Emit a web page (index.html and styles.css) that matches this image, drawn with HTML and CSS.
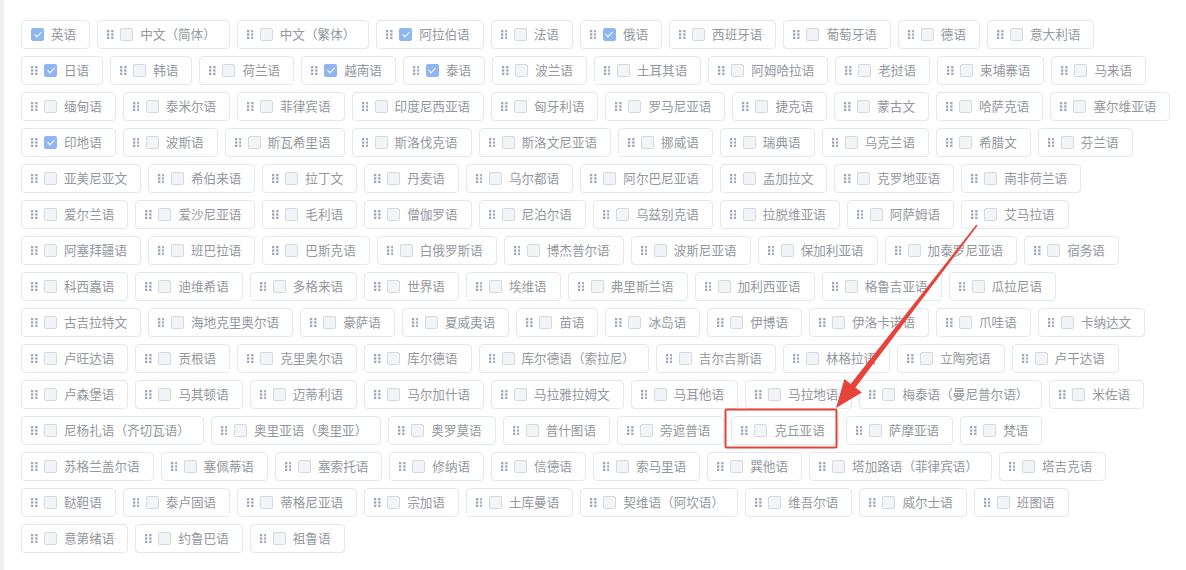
FILE: index.html
```html
<!DOCTYPE html>
<html lang="zh-CN">
<head>
<meta charset="utf-8">
<title>语言设置</title>
<link rel="stylesheet" href="styles.css">
</head>
<body>
<main class="panel">
  <ul class="lang-list" id="langList"></ul>
</main>

<svg class="mark-layer" width="1186" height="570" viewBox="0 0 1186 570" aria-hidden="true">
  <rect class="mark-box" x="725.5" y="409.5" width="111" height="38" rx="1"></rect>
  <polygon class="mark-arrow" points="976.4,224.5 850.7,384.0 844.4,379.1 836,408 861.8,392.5 855.5,387.6 977.6,225.5"></polygon>
</svg>

<script src="app.js"></script>
</body>
</html>
```

FILE: styles.css
```css
* {
  box-sizing: border-box;
}

html,
body {
  margin: 0;
  height: 100%;
  overflow: hidden;
}

body {
  background: #eef0f4;
  font-family: "Noto Sans CJK SC", "Microsoft YaHei", sans-serif;
  position: relative;
}

.panel {
  margin-left: 4px;
  height: 100%;
  background: #ffffff;
  padding: 20px 10px 0 17px;
}

.lang-list {
  list-style: none;
  margin: 0;
  padding: 0;
  display: flex;
  flex-wrap: wrap;
  gap: 7px 7px;
}

.lang-item {
  display: flex;
  align-items: center;
  height: 29px;
  padding: 0 13px 0 9px;
  border: 1px solid #e4e7ed;
  border-radius: 4px;
  background: #fff;
}

.drag-handle {
  display: block;
  width: 6.5px;
  height: 9px;
  margin-right: 6.5px;
  flex: none;
}

.drag-handle rect {
  fill: #9ca5b9;
}

.check {
  position: relative;
  width: 13px;
  height: 13px;
  flex: none;
  border: 1px solid #d5d8df;
  border-radius: 2px;
  background: #f2f4f7;
  margin-right: 7px;
}

.check.is-checked {
  background: #8fb6f3;
  border-color: #8fb6f3;
}

.check.is-checked::after {
  content: "";
  position: absolute;
  left: 3.5px;
  top: 1px;
  width: 3px;
  height: 6px;
  border: solid #ffffff;
  border-width: 0 1.3px 1.3px 0;
  transform: rotate(45deg);
}

.label {
  font-size: 12.6px;
  line-height: 1;
  color: #93979e;
  white-space: nowrap;
}

.mark-layer {
  position: absolute;
  left: 0;
  top: 0;
  pointer-events: none;
}

.mark-box {
  fill: none;
  stroke: #e8433a;
  stroke-width: 2;
}

.mark-arrow {
  fill: #e8433a;
}
```

FILE: app.js
```js
// Translation target languages; `on` marks enabled ones, `fixed` the pinned source language.
const languages = [
  ["英语", 1, 1], ["中文（简体）"], ["中文（繁体）"], ["阿拉伯语", 1], ["法语"], ["俄语", 1],
  ["西班牙语"], ["葡萄牙语"], ["德语"], ["意大利语"],
  ["日语", 1], ["韩语"], ["荷兰语"], ["越南语", 1], ["泰语", 1], ["波兰语"], ["土耳其语"],
  ["阿姆哈拉语"], ["老挝语"], ["柬埔寨语"], ["马来语"],
  ["缅甸语"], ["泰米尔语"], ["菲律宾语"], ["印度尼西亚语"], ["匈牙利语"], ["罗马尼亚语"],
  ["捷克语"], ["蒙古文"], ["哈萨克语"], ["塞尔维亚语"],
  ["印地语", 1], ["波斯语"], ["斯瓦希里语"], ["斯洛伐克语"], ["斯洛文尼亚语"], ["挪威语"],
  ["瑞典语"], ["乌克兰语"], ["希腊文"], ["芬兰语"],
  ["亚美尼亚文"], ["希伯来语"], ["拉丁文"], ["丹麦语"], ["乌尔都语"], ["阿尔巴尼亚语"],
  ["孟加拉文"], ["克罗地亚语"], ["南非荷兰语"],
  ["爱尔兰语"], ["爱沙尼亚语"], ["毛利语"], ["僧伽罗语"], ["尼泊尔语"], ["乌兹别克语"],
  ["拉脱维亚语"], ["阿萨姆语"], ["艾马拉语"],
  ["阿塞拜疆语"], ["班巴拉语"], ["巴斯克语"], ["白俄罗斯语"], ["博杰普尔语"], ["波斯尼亚语"],
  ["保加利亚语"], ["加泰罗尼亚语"], ["宿务语"],
  ["科西嘉语"], ["迪维希语"], ["多格来语"], ["世界语"], ["埃维语"], ["弗里斯兰语"],
  ["加利西亚语"], ["格鲁吉亚语"], ["瓜拉尼语"],
  ["古吉拉特文"], ["海地克里奥尔语"], ["豪萨语"], ["夏威夷语"], ["苗语"], ["冰岛语"],
  ["伊博语"], ["伊洛卡诺语"], ["爪哇语"], ["卡纳达文"],
  ["卢旺达语"], ["贡根语"], ["克里奥尔语"], ["库尔德语"], ["库尔德语（索拉尼）"], ["吉尔吉斯语"],
  ["林格拉语"], ["立陶宛语"], ["卢干达语"],
  ["卢森堡语"], ["马其顿语"], ["迈蒂利语"], ["马尔加什语"], ["马拉雅拉姆文"], ["马耳他语"],
  ["马拉地语"], ["梅泰语（曼尼普尔语）"], ["米佐语"],
  ["尼杨扎语（齐切瓦语）"], ["奥里亚语（奥里亚）"], ["奥罗莫语"], ["普什图语"], ["旁遮普语"],
  ["克丘亚语"], ["萨摩亚语"], ["梵语"],
  ["苏格兰盖尔语"], ["塞佩蒂语"], ["塞索托语"], ["修纳语"], ["信德语"], ["索马里语"],
  ["巽他语"], ["塔加路语（菲律宾语）"], ["塔吉克语"],
  ["鞑靼语"], ["泰卢固语"], ["蒂格尼亚语"], ["宗加语"], ["土库曼语"], ["契维语（阿坎语）"],
  ["维吾尔语"], ["威尔士语"], ["班图语"],
  ["意第绪语"], ["约鲁巴语"], ["祖鲁语"]
];

// Six-dot grip drawn as 2 columns x 3 rows of small squares.
const handleSvg =
  '<svg class="drag-handle" viewBox="0 0 6.5 9">' +
  '<rect x="0" y="0" width="2.3" height="2.3"/><rect x="4.2" y="0" width="2.3" height="2.3"/>' +
  '<rect x="0" y="3.35" width="2.3" height="2.3"/><rect x="4.2" y="3.35" width="2.3" height="2.3"/>' +
  '<rect x="0" y="6.7" width="2.3" height="2.3"/><rect x="4.2" y="6.7" width="2.3" height="2.3"/>' +
  '</svg>';

const list = document.getElementById("langList");
list.innerHTML = languages
  .map(([name, on, fixed]) =>
    '<li class="lang-item">' +
    (fixed ? "" : handleSvg) +
    '<span class="check' + (on ? " is-checked" : "") + '"></span>' +
    '<span class="label">' + name + "</span>" +
    "</li>"
  )
  .join("");
```
